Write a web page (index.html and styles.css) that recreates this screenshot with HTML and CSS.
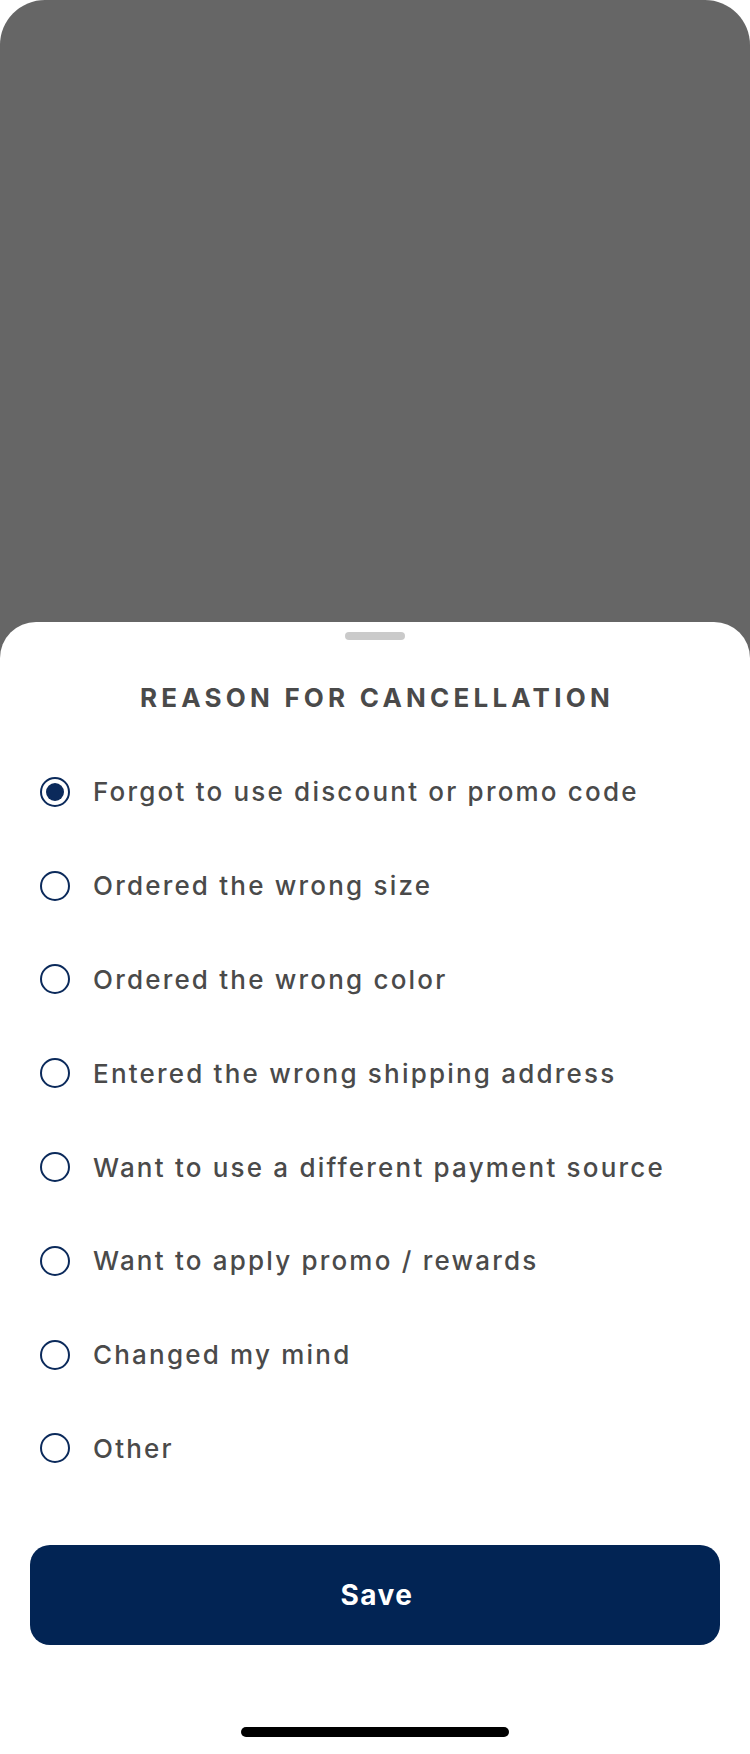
FILE: index.html
```html
<!DOCTYPE html>
<html lang="en">
<head>
<meta charset="utf-8">
<title>Reason for cancellation</title>
<link rel="stylesheet" href="styles.css">
</head>
<body>
<div class="screen">
  <div class="backdrop"></div>
  <div class="sheet">
    <div class="handle"></div>
    <h1 class="title">REASON FOR CANCELLATION</h1>
    <ul class="options">
      <li class="option"><span class="radio checked"></span><span class="label">Forgot to use discount or promo code</span></li>
      <li class="option"><span class="radio"></span><span class="label">Ordered the wrong size</span></li>
      <li class="option"><span class="radio"></span><span class="label">Ordered the wrong color</span></li>
      <li class="option"><span class="radio"></span><span class="label">Entered the wrong shipping address</span></li>
      <li class="option"><span class="radio"></span><span class="label">Want to use a different payment source</span></li>
      <li class="option"><span class="radio"></span><span class="label">Want to apply promo / rewards</span></li>
      <li class="option"><span class="radio"></span><span class="label">Changed my mind</span></li>
      <li class="option"><span class="radio"></span><span class="label">Other</span></li>
    </ul>
    <button class="save" type="button">Save</button>
    <div class="home-indicator"></div>
  </div>
</div>
</body>
</html>
```

FILE: styles.css
```css
* { box-sizing: border-box; }
html, body {
  margin: 0;
  padding: 0;
  background: #ffffff;
}
body {
  width: 750px;
  height: 1754px;
  overflow: hidden;
  font-family: "Inter", "Lato", sans-serif;
}
.screen {
  width: 750px;
  height: 1754px;
  background: #666666;
  border-radius: 45px 45px 0 0;
  display: flex;
  flex-direction: column;
}
.backdrop {
  flex: 0 0 622px;
}
.sheet {
  flex: 1;
  background: #ffffff;
  border-radius: 36px 36px 0 0;
  display: flex;
  flex-direction: column;
  align-items: center;
  padding-top: 10px;
}
.handle {
  width: 60px;
  height: 8px;
  border-radius: 4px;
  background: #cacaca;
}
.title {
  margin: 42px 0 0;
  padding-left: 4px;
  font-size: 26px;
  line-height: 32px;
  font-weight: 700;
  letter-spacing: 4.2px;
  color: #4a4a4a;
}
.options {
  list-style: none;
  margin: 31px 0 0;
  padding: 0;
  width: 100%;
}
.option {
  height: 93.8px;
  display: flex;
  align-items: center;
  padding-left: 40px;
  gap: 23px;
}
.radio {
  width: 30px;
  height: 30px;
  border-radius: 50%;
  border: 2px solid #0b2a5b;
  display: flex;
  align-items: center;
  justify-content: center;
  flex: 0 0 30px;
}
.radio.checked::after {
  content: "";
  width: 18px;
  height: 18px;
  border-radius: 50%;
  background: #0b2a5b;
}
.label {
  font-size: 26px;
  font-weight: 500;
  letter-spacing: 2.2px;
  color: #4a4a4a;
}
.save {
  margin-top: 50px;
  width: 690px;
  height: 100px;
  padding: 0 0 0 4px;
  border: none;
  border-radius: 20px;
  background: #022454;
  color: #ffffff;
  font-family: "Inter", "Lato", sans-serif;
  font-size: 28px;
  font-weight: 700;
  letter-spacing: 1.5px;
}
.home-indicator {
  margin-top: 82px;
  width: 268px;
  height: 10px;
  border-radius: 5px;
  background: #000000;
}
```
